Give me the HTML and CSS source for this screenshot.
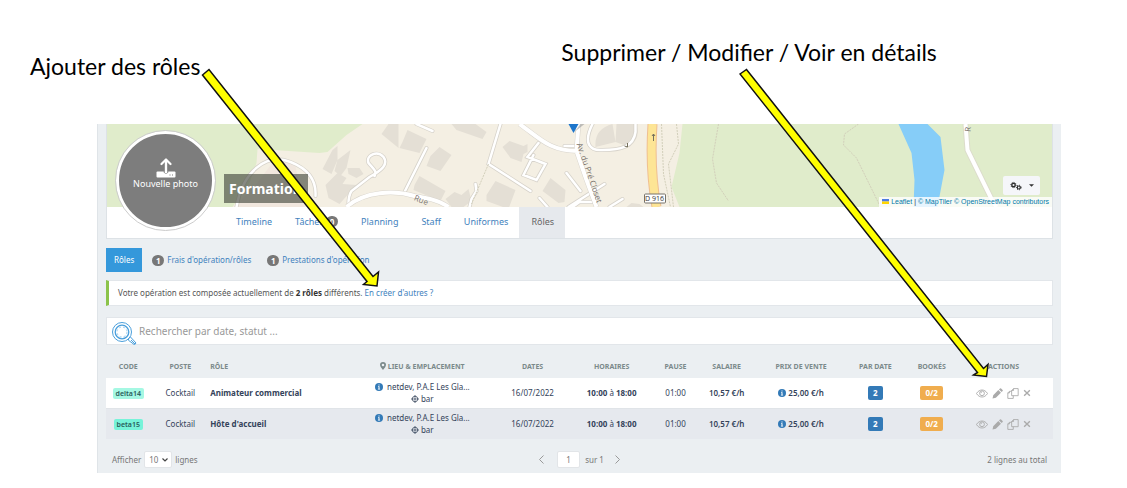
FILE: index.html
```html
<!DOCTYPE html>
<html lang="fr">
<head>
<meta charset="utf-8">
<title>Formation – Rôles</title>
<link rel="stylesheet" href="styles.css">
</head>
<body>
<svg class="defs" width="0" height="0" aria-hidden="true">
  <symbol id="info" viewBox="0 0 16 16"><circle cx="8" cy="8" r="8" fill="#337ab7"/><path d="M6 6.500h3v5h1.200v1.300H5.800v-1.300H7V8H6zM7 3h2v2H7z" fill="#fff"/></symbol>
  <symbol id="target" viewBox="0 0 16 16"><path d="M8 0v4M8 12v4M0 8h4M12 8h4" stroke="currentColor" stroke-width="1.500"/><circle cx="8" cy="8" r="5.500" fill="none" stroke="currentColor" stroke-width="1.500"/><circle cx="8" cy="8" r="2.200" fill="none" stroke="currentColor" stroke-width="1.600"/></symbol>
  <symbol id="eye" viewBox="0 0 24 18"><path d="M1 9C4 4 8 2 12 2s8 2 11 7c-3 5-7 7-11 7S4 14 1 9z" fill="none" stroke="currentColor" stroke-width="1.800"/><circle cx="12" cy="8.500" r="4.800" fill="none" stroke="currentColor" stroke-width="1.800"/><path d="M9.500 8.500A2.500 2.500 0 0 1 12 6" fill="none" stroke="currentColor" stroke-width="1.500"/></symbol>
  <symbol id="pencil" viewBox="0 0 20 20"><path d="M1 19l1.200-6L11.500 3.700l4.800 4.800L7 17.800zM12.700 2.500L14.500.7q1-.8 2 0l2.800 2.800q.8 1 0 2L17.500 7.300z" fill="currentColor"/></symbol>
  <symbol id="copy" viewBox="0 0 22 20"><path d="M12 1h8.500v13H8.500V4.500zM12 1v3.500H8.500M8.500 6H4.500L1.500 9v10h10v-5M4.500 6v3h-3" fill="none" stroke="currentColor" stroke-width="1.600"/></symbol>
  <symbol id="cross" viewBox="0 0 14 14"><path d="M2 2l10 10M12 2L2 12" stroke="currentColor" stroke-width="2.400"/></symbol>
</svg>

<header class="callouts">
  <p class="callout callout-add">Ajouter des rôles</p>
  <p class="callout callout-actions">Supprimer / Modifier / Voir en détails</p>
</header>

<main class="panel">
  <section class="cover">
    <div class="map">
      <svg class="map-art" viewBox="0 0 946 83" preserveAspectRatio="xMidYMid slice" aria-hidden="true">
        <rect width="946" height="83" fill="#f4efe3"/>
        <path d="M0 0H256L240 11 221 28 213 29 151 25 150 39 143 59 126 83H0zM576 0L573 29 565 63 573 83H946V0z" fill="#e0eccb"/>
        <path d="M150 60l18-24 20 2 10 45h-70z" fill="#f1e7de"/>
        <g fill="#e4dfd5">
          <path d="M226 26l5-4 0 14-6 14-9-5zM231 36l13-10-4 18-6 8-6-5zM219 61l12-12 9 5-4 6 14 1-17 19-11-6zM241 44l12 0 4 6-7 4-8-4zM296 18l5-12 19 9-7 14-20-5zM324 32l9-9 12 8-11 16-14-5zM345 0h24l11 8-4 7-26-9zM308 61l5-9 26 15-5 10-27-11zM339 75l9-7 7 3 7-6 3 12-8 6h-12zM380 71l9-14 20 9-7 19-22-8zM396 23l7-6 14 5 4-2 0 8-4 2-2 8-11-4zM436 67l8-13 15 12-1 12-6 1zM489 23c-1-12 5-20 17-23l3 18zM510 0h19c5 9 1 17-6 23l-14-5zM520 83l5-4 8 1 4 3z"/>
          <path d="M275 10l7-10h10v24z"/>
        </g>
        <g fill="none" stroke="#d6d2ca" stroke-width="4" stroke-linecap="round">
          <path d="M130 83C136 48 160 28 184 38c18 7 26 18 25 34M242 80c0-6 1-10 3-13l18-14c13-7 19-13 14-20-6-7-18-2-15 6 4 5 9 8 6 13M320 24l-22 44M310 0l16 7M394 0l-12 40 42 27M363 83l2-8 5-8-1-7M432 19l-11 14 18 7-9 16-13-5 10-20M498 60l-36 23M460 49l14 18M433 74l8 9M466 83l7-5 14 0 4-5M503 83l13-8M486 0c-10 20-2 27 10 26 18 0 31-3 33-18V0M458 22h10"/>
        </g>
        <g fill="none" stroke="#fff" stroke-width="2.500" stroke-linecap="round">
          <path d="M130 83C136 48 160 28 184 38c18 7 26 18 25 34M242 80c0-6 1-10 3-13l18-14c13-7 19-13 14-20-6-7-18-2-15 6 4 5 9 8 6 13M320 24l-22 44M310 0l16 7M394 0l-12 40 42 27M363 83l2-8 5-8-1-7M432 19l-11 14 18 7-9 16-13-5 10-20M498 60l-36 23M460 49l14 18M433 74l8 9M466 83l7-5 14 0 4-5M503 83l13-8M486 0c-10 20-2 27 10 26 18 0 31-3 33-18V0M458 22h10"/>
        </g>
        <g fill="none" stroke-linejoin="round">
          <path d="M240 83c18-16 48-17 68-11 12 2 24 4 34 11M413 0c20 14 30 27 58 27M472 0l-2 27 10 29 10 27" stroke="#d8d4cc" stroke-width="5"/>
          <path d="M240 83c18-16 48-17 68-11 12 2 24 4 34 11M413 0c20 14 30 27 58 27M472 0l-2 27 10 29 10 27" stroke="#fff" stroke-width="4"/>
          <path d="M546 0q-3 45 4 83" stroke="#efbf91" stroke-width="10"/>
          <path d="M546 0q-3 45 4 83" stroke="#fde595" stroke-width="8"/>
          <path d="M859 0l2 26 24 49 5 8" stroke="#dcdccb" stroke-width="6"/>
          <path d="M859 0l2 26 24 49 5 8" stroke="#fff" stroke-width="4"/>
        </g>
        <path d="M555 0l2 50 7 33M570 0l2 20-10 20 5 43M612 0l-6 35 4 24 12 18M382 40l-17 40M752 0l-14 10-1 11 13 13 24 49" fill="none" stroke="#d2cfba" stroke-dasharray="2 1"/>
        <path d="M792 0l13 29 3 27-1 27h24l7-37-4-33-13-13z" fill="#86cdf8"/>
        <path d="M468 8l10-8h-4z" fill="#999" opacity=".6"/>
        <path d="M462 0h10l-5 9z" fill="#1d75cb"/>
        <path d="M547 17v-7m-1.500 2l1.500-2 1.500 2M521 23l-3-1M521 19v4" fill="none" stroke="#75705c"/>
        <rect x="538" y="70" width="21" height="9" rx="1" fill="#fff" stroke="#77736b"/>
        <g class="map-label">
          <text x="548" y="77" text-anchor="middle" class="map-road">D 916</text>
          <text transform="translate(470 20) rotate(71)">Av. du Pré Closet</text>
          <text transform="translate(307 76) rotate(22)">Rue</text>
          <text transform="translate(864 8) rotate(-86)">R</text>
        </g>
      </svg>
      <h1 class="event-title">Formation</h1>
      <button class="settings" type="button" aria-label="Paramètres">
        <svg width="12" height="10" viewBox="0 0 12 10" aria-hidden="true"><g fill="none" stroke="#2b2b2b"><circle cx="3.500" cy="4" r="1.700" stroke-width="1.300"/><circle cx="3.500" cy="4" r="2.600" stroke-dasharray="1 1"/><circle cx="8.800" cy="6.500" r="1.500" stroke-width="1.200"/><circle cx="8.800" cy="6.500" r="2.300" stroke-dasharray="1 1"/></g></svg>
        <svg width="5" height="3" viewBox="0 0 6 3" aria-hidden="true"><path d="M0 0h6L3 3z" fill="#333"/></svg>
      </button>
      <div class="attribution">
        <svg width="7" height="5" viewBox="0 0 7 5" aria-hidden="true"><path d="M0 0h7v2.500H0z" fill="#4c7be1"/><path d="M0 2.500h7V5H0z" fill="#ffd500"/></svg>
        <a href="#">Leaflet</a> | <a href="#">© MapTiler</a> <a href="#">© OpenStreetMap contributors</a>
      </div>
    </div>
    <nav class="main-nav">
      <a href="#">Timeline</a>
      <a href="#">Tâches <span class="count">0</span></a>
      <a href="#">Planning</a>
      <a href="#">Staff</a>
      <a href="#">Uniformes</a>
      <a href="#" class="active">Rôles</a>
    </nav>
    <button class="avatar" type="button">
      <svg width="20" height="20" viewBox="0 0 20 20" aria-hidden="true"><path d="M10 14V2M5.500 6L10 1.500 14.500 6" fill="none" stroke="#fff" stroke-width="2.200" stroke-linecap="round" stroke-linejoin="round"/><path d="M1.500 13.500h17q1 0 1 1v4q0 1-1 1h-17q-1 0-1-1v-4q0-1 1-1z" fill="#fff"/><path d="M8.200 13v1.500q1.800 1.500 3.600 0V13M13.500 17h1m1.500 0h1" fill="none" stroke="#7d7d7d"/><path d="M10 5v10" stroke="#fff" stroke-width="2.200"/></svg>
      Nouvelle photo
    </button>
  </section>

  <nav class="sub-nav">
    <a href="#" class="active">Rôles</a>
    <a href="#"><span class="count">1</span> Frais d'opération/rôles</a>
    <a href="#"><span class="count">1</span> Prestations d'opération</a>
  </nav>

  <p class="notice">Votre opération est composée actuellement de <strong>2 rôles</strong> différents. <a href="#">En créer d'autres ?</a></p>

  <label class="search">
    <svg width="26" height="24" viewBox="0 0 26 24" aria-hidden="true"><g fill="none" stroke="#4a9fdc"><circle cx="11" cy="11" r="9.500"/><circle cx="11" cy="11" r="6.800" stroke-width="1.300"/><circle cx="11" cy="11" r="5" stroke-dasharray="2 2" opacity=".5"/><path d="M17.500 17.500l2-1.500 5.500 6-1.500 1.800-6-4.500zM20 19l4 4"/></g></svg>
    <input type="search" aria-label="Rechercher" placeholder="Rechercher par date, statut ...">
  </label>

  <table class="roles">
    <colgroup><col class="c-code"><col class="c-poste"><col class="c-role"><col class="c-lieu"><col class="c-dates"><col class="c-hours"><col class="c-pause"><col class="c-salary"><col class="c-price"><col class="c-perdate"><col class="c-booked"><col class="c-actions"></colgroup>
    <thead>
      <tr><th>CODE</th><th>POSTE</th><th class="left">RÔLE</th><th><svg width="6" height="8" viewBox="0 0 6 8" aria-hidden="true"><path d="M3 0a3 3 0 0 1 3 3q0 2-3 5-3-3-3-5a3 3 0 0 1 3-3zm0 1.700a1.300 1.300 0 1 0 0 2.600 1.300 1.300 0 0 0 0-2.600z" fill="#7b8a8b"/></svg> LIEU &amp; EMPLACEMENT</th><th>DATES</th><th>HORAIRES</th><th>PAUSE</th><th>SALAIRE</th><th>PRIX DE VENTE</th><th>PAR DATE</th><th>BOOKÉS</th><th class="actions-col">ACTIONS</th></tr>
    </thead>
    <tbody>
      <tr>
        <td><span class="code">delta14</span></td><td>Cocktail</td><td class="left"><strong>Animateur commercial</strong></td>
        <td><svg class="info"><use href="#info"/></svg>&nbsp; netdev, P.A.E Les Gla...<br><svg class="target"><use href="#target"/></svg> bar</td>
        <td>16/07/2022</td><td><strong>10:00</strong> à <strong>18:00</strong></td><td>01:00</td><td class="money">10,57 €/h</td>
        <td class="money"><svg class="info"><use href="#info"/></svg> 25,00 €/h</td>
        <td><span class="tag blue">2</span></td><td><span class="tag orange">0/2</span></td>
        <td class="actions-col"><div class="actions"><button type="button" aria-label="Voir"><svg width="12" height="9"><use href="#eye"/></svg></button><button type="button" aria-label="Modifier"><svg width="11" height="11"><use href="#pencil"/></svg></button><button type="button" aria-label="Dupliquer"><svg width="12" height="11"><use href="#copy"/></svg></button><button type="button" aria-label="Supprimer"><svg width="8" height="8"><use href="#cross"/></svg></button></div></td>
      </tr>
      <tr>
        <td><span class="code strong">beta15</span></td><td>Cocktail</td><td class="left"><strong>Hôte d'accueil</strong></td>
        <td><svg class="info"><use href="#info"/></svg>&nbsp; netdev, P.A.E Les Gla...<br><svg class="target"><use href="#target"/></svg> bar</td>
        <td>16/07/2022</td><td><strong>10:00</strong> à <strong>18:00</strong></td><td>01:00</td><td class="money">10,57 €/h</td>
        <td class="money"><svg class="info"><use href="#info"/></svg> 25,00 €/h</td>
        <td><span class="tag blue">2</span></td><td><span class="tag orange">0/2</span></td>
        <td class="actions-col"><div class="actions"><button type="button" aria-label="Voir"><svg width="12" height="9"><use href="#eye"/></svg></button><button type="button" aria-label="Modifier"><svg width="11" height="11"><use href="#pencil"/></svg></button><button type="button" aria-label="Dupliquer"><svg width="12" height="11"><use href="#copy"/></svg></button><button type="button" aria-label="Supprimer"><svg width="8" height="8"><use href="#cross"/></svg></button></div></td>
      </tr>
    </tbody>
  </table>

  <footer class="table-footer">
    <div class="page-size"><label for="size">Afficher</label>
      <span class="select"><select id="size"><option>10</option></select><svg width="6" height="4" viewBox="0 0 6 4" aria-hidden="true"><path d="M.5.500L3 3 5.500.500" fill="none" stroke="#444" stroke-width="1.200"/></svg></span>
      <span>lignes</span></div>
    <div class="pager">
      <button type="button" aria-label="Page précédente"><svg width="5" height="9" viewBox="0 0 5 9"><path d="M4.500.500l-4 4 4 4" fill="none" stroke="#999"/></svg></button>
      <input type="text" value="1" aria-label="Page"><span>sur 1</span>
      <button type="button" aria-label="Page suivante"><svg width="5" height="9" viewBox="0 0 5 9"><path d="M.5.500l4 4-4 4" fill="none" stroke="#999"/></svg></button>
    </div>
    <div class="total">2 lignes au total</div>
  </footer>
</main>

<svg class="arrows" width="1127" height="488" viewBox="0 0 1127 488" aria-hidden="true">
  <g fill="#ff0" stroke="#111" stroke-width="1.500">
    <path d="M202.500 75L209 69.500 373 276.500 378.500 272 377 286 363.500 284.500 367 281.500z"/>
    <path d="M740 74L746.500 69.500 983.500 368.500 988 364.500 986.500 376.500 973.500 375 977.500 372.500z"/>
  </g>
</svg>
</body>
</html>
```
FILE: styles.css
```css
* { box-sizing: border-box; }
body {
  margin: 0;
  position: relative;
  background: #fff;
  color: #34435a;
  font: 8px/12px "Noto Sans", "Open Sans", sans-serif;
}
a { color: #3f82bd; text-decoration: none; }
button, input, select { font: inherit; color: inherit; border: 0; padding: 0; margin: 0; background: none; }
.defs { position: absolute; }

.callouts {
  display: flex;
  gap: 361px;
  height: 124px;
  padding: 38px 0 0 30px;
  color: #000;
  font: 23px/28px Lato, sans-serif;
  white-space: nowrap;
}
.callout { margin: 0; }
.callout-add { padding-top: 14px; }

.panel {
  margin: 0 66px 0 97px;
  padding: 0 8px;
  background: #ebeff2;
  border-left: 1px solid #dfe4e8;
}

.cover { position: relative; background: #fff; border: solid #dde2e6; border-width: 0 1px 1px; }
.map { position: relative; height: 83px; overflow: hidden; }
.map-art { display: block; width: 100%; height: 100%; }
.map-label { font: 8px "Open Sans", sans-serif; fill: #77706a; }
.map-road { font-size: 7px; fill: #333; }
.event-title {
  position: absolute;
  left: 117px;
  bottom: 4px;
  margin: 0;
  width: 84px;
  padding: 5px;
  background: rgba(70, 75, 65, .65);
  color: #fff;
  font-size: 14px;
  line-height: 19px;
}
.settings {
  position: absolute;
  right: 12px;
  bottom: 12px;
  display: flex;
  align-items: center;
  justify-content: center;
  gap: 7px;
  width: 37px;
  height: 19px;
  border-radius: 2px;
  background: #f5f6f9;
}
.attribution {
  position: absolute;
  right: 0;
  bottom: 0;
  padding: 0 3px;
  background: rgba(255, 255, 255, .8);
  color: #333;
  font: 7px/10px "Liberation Sans", sans-serif;
}
.attribution a { color: #0078a8; }

.main-nav { display: flex; padding-left: 117px; font-size: 9px; }
.main-nav a { padding: 9px 11px 10px 12px; }
.main-nav .active { background: #e6e9ed; color: #666; }
.count {
  display: inline-block;
  width: 12px;
  border-radius: 6px;
  background: #777;
  color: #fff;
  font-size: 8px;
  font-weight: 700;
  line-height: 11px;
  text-align: center;
}
.avatar {
  position: absolute;
  left: 9px;
  top: 7px;
  display: flex;
  flex-direction: column;
  align-items: center;
  width: 99px;
  height: 99px;
  padding-top: 24px;
  border: 3px solid #fff;
  border-radius: 50%;
  outline: 1px solid #ccc;
  background: #7d7d7d;
  color: #fff;
  font-size: 9px;
}

.sub-nav { display: flex; gap: 10px; padding-top: 9px; }
.sub-nav a { display: flex; gap: 3px; align-items: center; height: 24px; }
.sub-nav a:not(.active) { padding-right: 6px; }
.sub-nav .active { padding: 0 8px; background: #3498db; color: #fff; }

.notice {
  margin: 8px 0 11px;
  padding: 6px 9px;
  border: 1px solid #e2e6ea;
  border-left: 3px solid #8bc34a;
  background: #fff;
  color: #555;
}
.notice strong { color: #333; }

.search {
  display: flex;
  align-items: flex-start;
  gap: 2px;
  height: 28px;
  padding: 3px 4px 0;
  border: 1px solid #e2e6ea;
  background: #fff;
}
.search input { flex: 1; min-width: 0; height: 20px; font-size: 10px; outline: 0; appearance: none; }
.search input::placeholder { color: #999; opacity: 1; }

.roles { width: 100%; table-layout: fixed; border-collapse: collapse; text-align: center; white-space: nowrap; }
.c-code { width: 4.7%; }
.c-poste { width: 6.3%; }
.c-role { width: 15.1%; }
.c-lieu { width: 14.6%; }
.c-dates { width: 8.7%; }
.c-hours { width: 8%; }
.c-pause { width: 5.5%; }
.c-salary { width: 5.3%; }
.c-price { width: 10.4%; }
.c-perdate { width: 5.3%; }
.c-booked { width: 6.6%; }
.c-actions { width: 9.5%; }
.roles th { height: 33px; padding: 10px 0 0; color: #7b8a8b; font-size: 7px; }
.roles td { height: 30px; padding: 3px 0; }
.roles tbody tr { background: #fff; }
.roles tbody tr + tr { background: #e6e9ee; border-top: 1px solid #e0e4e8; }
.roles .left { text-align: left; }
.roles .actions-col { padding-right: 9px; }
.roles svg { vertical-align: -1px; }
.money { font-weight: 600; }
.info { width: 8px; height: 8px; }
.target { width: 8px; height: 8px; }
.code {
  display: inline-block;
  padding: 0 3px;
  border-radius: 2px;
  background: #a5f8e3;
  color: #285b5b;
  font-size: 7px;
  font-weight: 600;
  line-height: 11px;
}
.code.strong { background: #77f3d9; }
.tag { display: inline-block; padding: 0 5px; border-radius: 2px; color: #fff; font-weight: 700; line-height: 14px; }
.blue { background: #337ab7; }
.orange { background: #f0ad4e; }
.actions { display: flex; justify-content: center; align-items: center; gap: 4px; color: #aaa; }
.actions button { display: flex; }

.table-footer {
  display: grid;
  grid-template-columns: 1fr auto 1fr;
  align-items: center;
  padding: 12px 6px 5px;
  color: #777;
}
.page-size, .pager { display: flex; align-items: center; gap: 3px; }
.select { position: relative; display: flex; align-items: center; }
.select select { width: 28px; height: 17px; padding-left: 4px; appearance: none; border: 1px solid #e2e5e8; border-radius: 2px; background: #fff; }
.select svg { position: absolute; right: 4px; }
.pager input { width: 23px; height: 17px; margin: 0 2px 0 10px; text-align: center; border: 1px solid #e2e5e8; border-radius: 2px; background: #fff; }
.pager button { display: flex; }
.pager button:last-child { margin-left: 8px; }
.total { text-align: right; }

.arrows { position: absolute; left: 0; top: 0; pointer-events: none; }
```
